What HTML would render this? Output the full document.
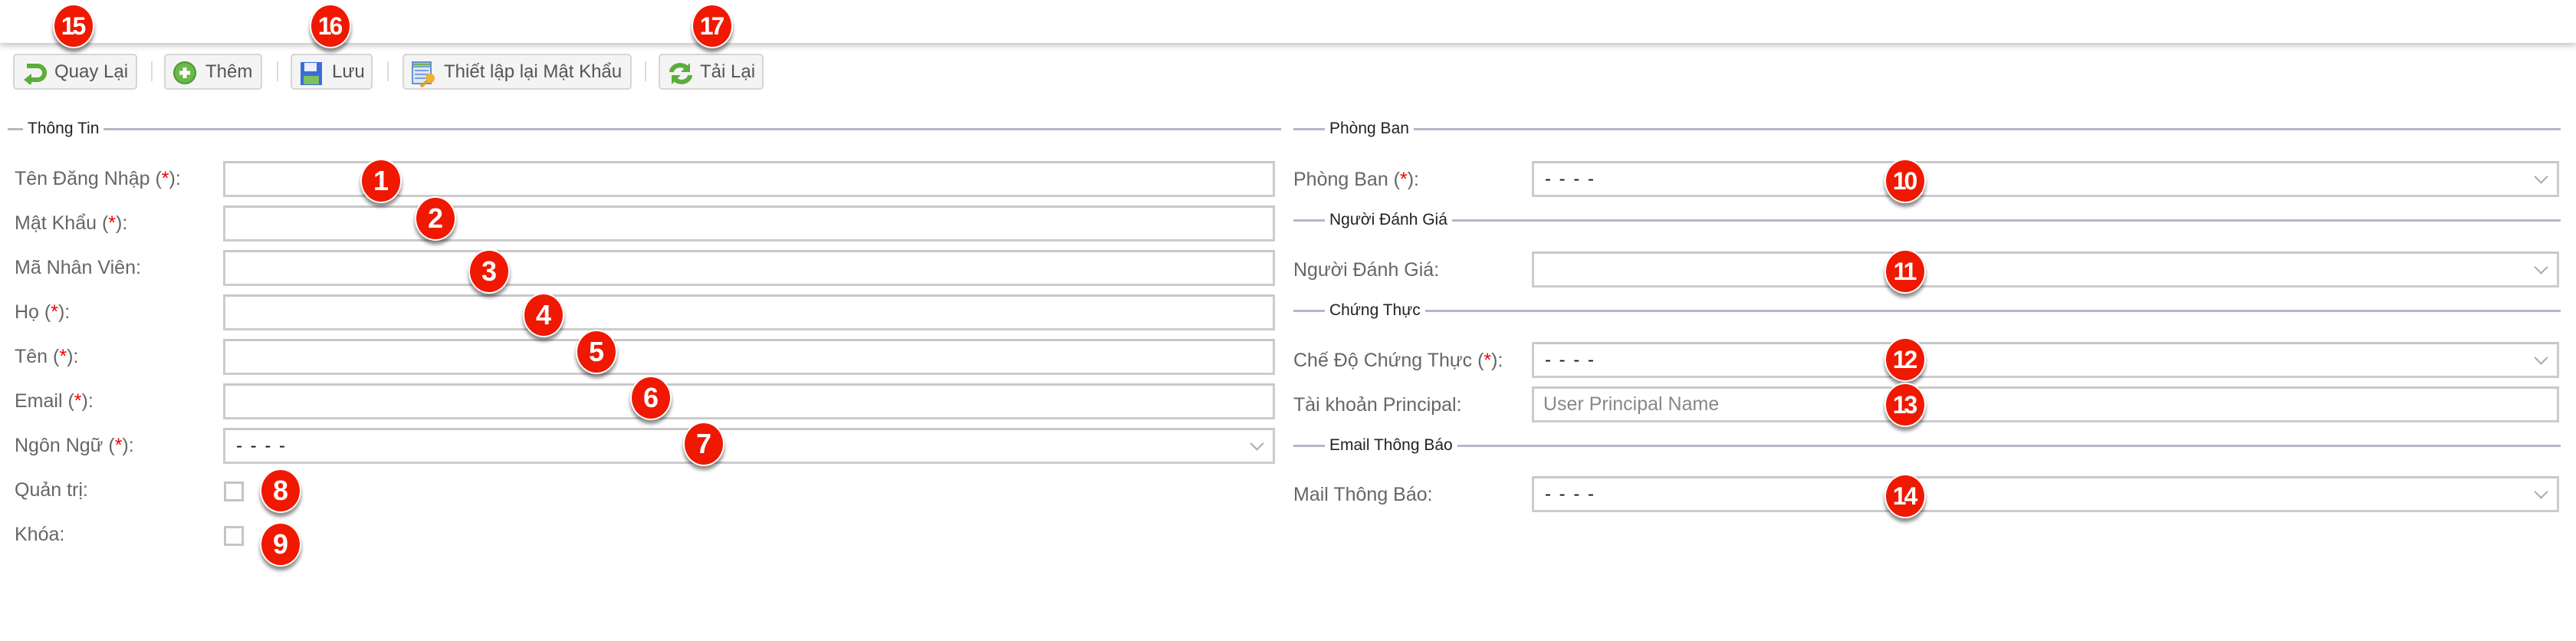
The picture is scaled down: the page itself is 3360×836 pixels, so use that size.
<!DOCTYPE html>
<html><head><meta charset="utf-8">
<style>
*{box-sizing:border-box;margin:0;padding:0}
body{width:3360px;height:836px;background:#fff;font-family:"Liberation Sans",sans-serif;position:relative;overflow:hidden}
.hdr{position:absolute;left:0;top:0;width:3360px;height:56px;background:#fff;box-shadow:0 3px 8px rgba(0,0,0,.25)}
.btn{position:absolute;top:70px;height:47px;background:#f4f4f4;border:2px solid #d6d6d6;border-radius:5px;font-size:24px;color:#555;line-height:43px;padding-left:52px;white-space:nowrap}
.btn svg{position:absolute;left:10px;top:8px}
.sep{position:absolute;top:80px;width:2px;height:26px;background:#ddd}
.leg{position:absolute;height:3px;background:#b4b7c6}
.legt{position:absolute;font-size:21px;color:#222;background:#fff;padding:0 6px;line-height:24px}
.lbl{position:absolute;font-size:25px;color:#666;line-height:30px;white-space:nowrap}
.lbl b{color:#e00;font-weight:normal}
.inp{position:absolute;height:47px;border:3px solid #ccc;border-top-color:#c8c8c8;background:#fff}
.sel{font-size:24px;color:#111;line-height:41px;padding-left:14px;letter-spacing:2px}
.sel:after{content:"";position:absolute;right:14px;top:11px;width:11px;height:11px;border-right:2px solid #aaa;border-bottom:2px solid #aaa;transform:rotate(45deg)}
.ph{font-size:25px;color:#888;line-height:41px;padding-left:12px}
.cb{position:absolute;width:26px;height:26px;border:3px solid #c4c4c4;background:#fff}
.bd{position:absolute;width:54px;height:58px;margin:-29px 0 0 -27px;border-radius:50%;background:#f01800;border:2px solid #fff;color:#fff;font-weight:bold;font-size:36px;text-align:center;line-height:54px;box-shadow:0 5px 5px rgba(0,0,0,.45)}
.bd.s{font-size:32px;letter-spacing:-3px;text-indent:-3px}
</style></head><body>
<div class="hdr"></div>

<div class="btn" style="left:17px;width:162px"><svg width="34" height="30" viewBox="0 0 34 30"><path d="M6 6h14a9 9 0 0 1 0 18H10" fill="none" stroke="#5cae3a" stroke-width="6"/><path d="M2 24l10-8v16z" fill="#5cae3a"/></svg>Quay Lại</div>
<div class="sep" style="left:197px"></div>
<div class="btn" style="left:214px;width:128px"><svg width="32" height="32" viewBox="0 0 32 32"><circle cx="15" cy="15" r="14" fill="#6cb84a" stroke="#4a9a30" stroke-width="2"/><path d="M15 8v14M8 15h14" stroke="#fff" stroke-width="5"/></svg>Thêm</div>
<div class="sep" style="left:361px"></div>
<div class="btn" style="left:379px;width:107px"><svg width="30" height="32" viewBox="0 0 30 32"><rect x="1" y="1" width="28" height="30" fill="#3a6ed6"/><rect x="6" y="2" width="16" height="11" fill="#eef"/><rect x="5" y="19" width="20" height="11" fill="#7cc060"/></svg>Lưu</div>
<div class="sep" style="left:505px"></div>
<div class="btn" style="left:525px;width:299px"><svg width="34" height="34" viewBox="0 0 34 34"><rect x="1" y="1" width="24" height="28" fill="#dde8f8" stroke="#6a8fcf" stroke-width="2"/><path d="M2 7h22M4 12h18M4 17h18M4 22h18" stroke="#7aa0dc" stroke-width="2"/><path d="M2 4h22" stroke="#6cb84a" stroke-width="3"/><circle cx="24" cy="22" r="6" fill="#f0b030"/><path d="M20 26l-8 7" stroke="#e0a020" stroke-width="4"/></svg>Thiết lập lại Mật Khẩu</div>
<div class="sep" style="left:841px"></div>
<div class="btn" style="left:859px;width:137px"><svg width="34" height="32" viewBox="0 0 34 32"><path d="M5 14a11 9 0 0 1 20-5" fill="none" stroke="#5cae3a" stroke-width="6"/><path d="M29 2v12h-12z" fill="#5cae3a"/><path d="M29 18a11 9 0 0 1-20 5" fill="none" stroke="#5cae3a" stroke-width="6"/><path d="M5 30v-12h12z" fill="#5cae3a"/></svg>Tải Lại</div>

<!-- left fieldset -->
<div class="leg" style="left:10px;top:167px;width:1661px"></div>
<div class="legt" style="left:30px;top:156px">Thông Tin</div>
<div class="lbl" style="left:19px;top:218px">Tên Đăng Nhập (<b>*</b>):</div>
<div class="inp" style="left:291px;top:210px;width:1372px"></div>
<div class="lbl" style="left:19px;top:276px">Mật Khẩu (<b>*</b>):</div>
<div class="inp" style="left:291px;top:268px;width:1372px"></div>
<div class="lbl" style="left:19px;top:334px">Mã Nhân Viên:</div>
<div class="inp" style="left:291px;top:326px;width:1372px"></div>
<div class="lbl" style="left:19px;top:392px">Họ (<b>*</b>):</div>
<div class="inp" style="left:291px;top:384px;width:1372px"></div>
<div class="lbl" style="left:19px;top:450px">Tên (<b>*</b>):</div>
<div class="inp" style="left:291px;top:442px;width:1372px"></div>
<div class="lbl" style="left:19px;top:508px">Email (<b>*</b>):</div>
<div class="inp" style="left:291px;top:500px;width:1372px"></div>
<div class="lbl" style="left:19px;top:566px">Ngôn Ngữ (<b>*</b>):</div>
<div class="inp sel" style="left:291px;top:558px;width:1372px">- - - -</div>
<div class="lbl" style="left:19px;top:624px">Quản trị:</div>
<div class="cb" style="left:292px;top:628px"></div>
<div class="lbl" style="left:19px;top:682px">Khóa:</div>
<div class="cb" style="left:292px;top:686px"></div>

<!-- right -->
<div class="leg" style="left:1687px;top:167px;width:1653px"></div>
<div class="legt" style="left:1728px;top:156px">Phòng Ban</div>
<div class="lbl" style="left:1687px;top:219px">Phòng Ban (<b>*</b>):</div>
<div class="inp sel" style="left:1998px;top:210px;width:1340px">- - - -</div>
<div class="leg" style="left:1687px;top:286px;width:1653px"></div>
<div class="legt" style="left:1728px;top:275px">Người Đánh Giá</div>
<div class="lbl" style="left:1687px;top:337px">Người Đánh Giá:</div>
<div class="inp sel" style="left:1998px;top:328px;width:1340px"></div>
<div class="leg" style="left:1687px;top:404px;width:1653px"></div>
<div class="legt" style="left:1728px;top:393px">Chứng Thực</div>
<div class="lbl" style="left:1687px;top:455px">Chế Độ Chứng Thực (<b>*</b>):</div>
<div class="inp sel" style="left:1998px;top:446px;width:1340px">- - - -</div>
<div class="lbl" style="left:1687px;top:513px">Tài khoản Principal:</div>
<div class="inp ph" style="left:1998px;top:504px;width:1340px">User Principal Name</div>
<div class="leg" style="left:1687px;top:580px;width:1653px"></div>
<div class="legt" style="left:1728px;top:569px">Email Thông Báo</div>
<div class="lbl" style="left:1687px;top:630px">Mail Thông Báo:</div>
<div class="inp sel" style="left:1998px;top:621px;width:1340px">- - - -</div>

<!-- badges -->
<div class="bd" style="left:497px;top:236px">1</div>
<div class="bd" style="left:568px;top:285px">2</div>
<div class="bd" style="left:638px;top:354px">3</div>
<div class="bd" style="left:709px;top:411px">4</div>
<div class="bd" style="left:778px;top:459px">5</div>
<div class="bd" style="left:849px;top:519px">6</div>
<div class="bd" style="left:918px;top:579px">7</div>
<div class="bd" style="left:366px;top:640px">8</div>
<div class="bd" style="left:366px;top:710px">9</div>
<div class="bd s" style="left:2485px;top:236px">10</div>
<div class="bd s" style="left:2485px;top:354px">11</div>
<div class="bd s" style="left:2485px;top:469px">12</div>
<div class="bd s" style="left:2485px;top:528px">13</div>
<div class="bd s" style="left:2485px;top:647px">14</div>
<div class="bd s" style="left:96px;top:34px">15</div>
<div class="bd s" style="left:431px;top:34px">16</div>
<div class="bd s" style="left:929px;top:34px">17</div>
</body></html>
